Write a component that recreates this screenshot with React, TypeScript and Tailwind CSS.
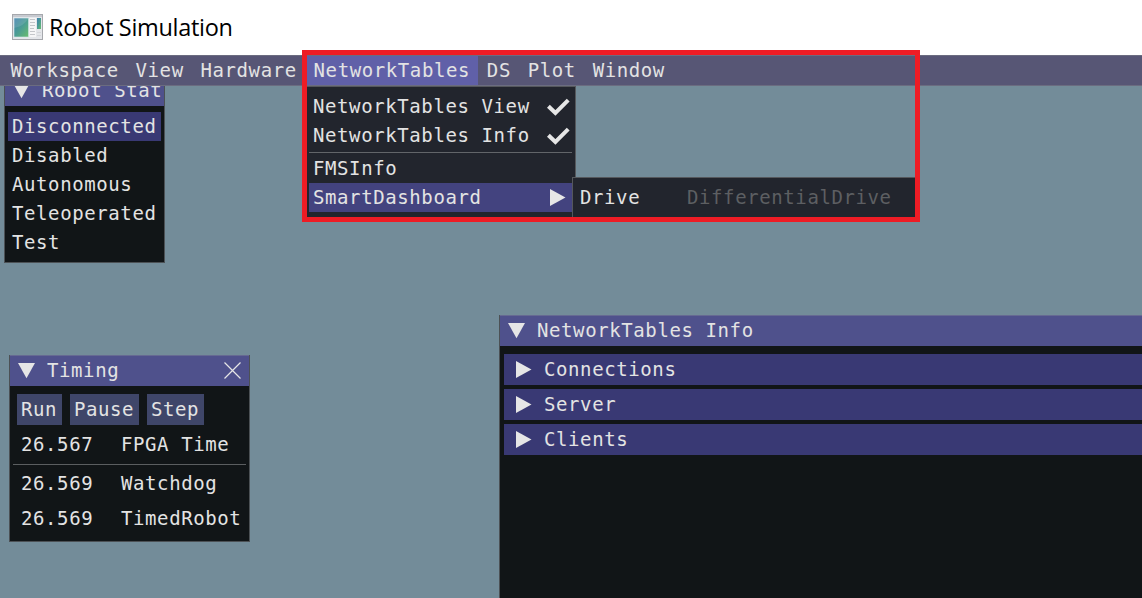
import React from "react";

function Down({ className = "" }: { className?: string }) {
  return (
    <svg width="17" height="16" viewBox="0 0 17 16" className={"shrink-0 " + className}>
      <path d="M0 0H17L8.5 15.3Z" fill="#e6e6e6" />
    </svg>
  );
}

function Right({ className = "" }: { className?: string }) {
  return (
    <svg width="16" height="17" viewBox="0 0 16 17" className={"shrink-0 " + className}>
      <path d="M0 0V17L15.5 8.5Z" fill="#e6e6e6" />
    </svg>
  );
}

function Check() {
  return (
    <svg width="23" height="18" viewBox="0 0 23 18" className="shrink-0">
      <path d="M1.4 8.2L8.4 15L21.2 2.2" fill="none" stroke="#e6e6e6" strokeWidth="4" />
    </svg>
  );
}

function AppIcon() {
  return (
    <svg width="32" height="27" viewBox="0 0 32 27" className="shrink-0">
      <defs>
        <linearGradient id="screen" x1="0" y1="0" x2="1" y2="1">
          <stop offset="0" stopColor="#3f7fae" />
          <stop offset="0.5" stopColor="#4b9c94" />
          <stop offset="1" stopColor="#68bd6c" />
        </linearGradient>
      </defs>
      <rect x="0.5" y="0.5" width="30" height="25" fill="#e4e6ea" stroke="#a6a8ad" />
      <rect x="1" y="1" width="29" height="2" fill="#c7cad0" />
      <rect x="2" y="4" width="14.5" height="19" fill="url(#screen)" stroke="#d3e8ea" strokeWidth="0.6" />
      <path d="M2 14Q12 12 16 5V4H2Z" fill="#ffffff" opacity="0.12" />
      <rect x="17.5" y="4" width="6.5" height="19" fill="#f6f6f7" />
      <path d="M18 5.5h5M18 8.5h5M18 11.5h5M18 14.5h4M18 17.5h5M18 20.5h5" stroke="#c4c6ca" strokeWidth="1" />
      <rect x="25" y="4" width="4" height="11" fill="url(#screen)" />
      <path d="M25 18.5h4M25 21.5h4" stroke="#d3d5d9" />
    </svg>
  );
}

const menuItems = ["Workspace", "View", "Hardware", "NetworkTables", "DS", "Plot", "Window"];
const modes = ["Disconnected", "Disabled", "Autonomous", "Teleoperated", "Test"];

function TitleBar({ children }: { children: React.ReactNode }) {
  return (
    <div className="flex h-[31px] items-center border-t border-[#666a92] bg-[#4f518c] pb-px pl-2 pr-2">
      {children}
    </div>
  );
}

function TimeRow({ value, name }: { value: string; name: string }) {
  return (
    <div className="flex h-[35px] items-center pl-[11px]">
      <span className="w-[100px]">{value}</span>
      <span>{name}</span>
    </div>
  );
}

export default function App() {
  return (
    <div className="relative flex h-[598px] w-[1142px] flex-col overflow-hidden bg-[#738c99] font-['DejaVu_Sans_Mono',monospace] text-[19px] leading-[29px] tracking-[0.6px] whitespace-pre text-[#e3e3e3]">
      <header className="flex h-[55px] shrink-0 items-center bg-white pl-3 font-['Open_Sans',sans-serif] text-[23.5px] tracking-[-0.3px] text-black">
        <AppIcon />
        <span className="pl-[5px]">Robot Simulation</span>
      </header>

      <nav className="z-10 flex h-[31px] shrink-0 border-y border-[#6b6c80] bg-[#575675] pl-[2px]">
        {menuItems.map((m) => (
          <span
            key={m}
            className={"px-[8.4px] " + (m === "NetworkTables" ? "bg-[#6060a8]" : "")}
          >
            {m}
          </span>
        ))}
      </nav>

      <section className="absolute left-1 top-[75px] flex h-[188px] w-[161px] flex-col border border-t-0 border-[#4c5155] bg-[#111517]">
        <div className="flex h-[31px] shrink-0 items-center bg-[#4f518c] pl-2">
          <Down />
          <span className="ml-3 w-[121px] overflow-hidden">Robot State</span>
        </div>
        <div className="px-[3px] pt-[6px]">
          {modes.map((m) => (
            <div key={m} className={"h-[29px] pl-1 " + (m === "Disconnected" ? "bg-[#393974]" : "")}>
              {m}
            </div>
          ))}
        </div>
      </section>

      <section className="absolute left-[9px] top-[355px] flex h-[187px] w-[241px] flex-col border border-t-0 border-[#4c5155] bg-[#111517]">
        <TitleBar>
          <Down />
          <span className="flex-1 pl-3">Timing</span>
          <svg width="17" height="17" viewBox="0 0 17 17">
            <path d="M0.5 0.5L16.5 16.5M16.5 0.5L0.5 16.5" stroke="#e6e6e6" strokeWidth="1.2" />
          </svg>
        </TitleBar>
        <div className="flex gap-2 pl-[7px] pt-2">
          {["Run", "Pause", "Step"].map((b) => (
            <button key={b} className="h-[31px] bg-[#3f4669] pl-1 pr-[4.8px] tracking-[0.6px]">
              {b}
            </button>
          ))}
        </div>
        <div className="pt-[2px]">
          <TimeRow value="26.567" name="FPGA Time" />
        </div>
        <div className="mx-[3px] mt-[2px] mb-[1px] h-px shrink-0 bg-[#5b5e60]" />
        <TimeRow value="26.569" name="Watchdog" />
        <TimeRow value="26.569" name="TimedRobot" />
      </section>

      <section className="absolute left-[499px] top-[315px] flex h-[283px] w-[643px] flex-col border-l border-[#4c5155] bg-[#111517]">
        <TitleBar>
          <Down />
          <span className="pl-3">NetworkTables Info</span>
        </TitleBar>
        <div className="flex flex-col gap-1 pl-1 pt-2">
          {["Connections", "Server", "Clients"].map((h) => (
            <div key={h} className="flex h-[31px] items-center bg-[#393974] pl-3">
              <Right />
              <span className="pl-3">{h}</span>
            </div>
          ))}
        </div>
      </section>

      <div className="absolute left-[306px] top-[86px] h-[134px] w-[270px] border border-[#55585c] bg-[#22252d] pl-[2px] pr-[3px] pt-[5px]">
        {["NetworkTables View", "NetworkTables Info"].map((t) => (
          <div key={t} className="flex h-[29px] items-center justify-between pl-[4px] pr-[2px]">
            <span>{t}</span>
            <Check />
          </div>
        ))}
        <div className="my-[2px] h-px bg-[#626569]" />
        <div className="-mt-px h-[29px] pl-[4px]">FMSInfo</div>
        <div className="flex h-[29px] items-center justify-between bg-[#43437f] pl-[4px] pr-[6px]">
          <span>SmartDashboard</span>
          <Right />
        </div>
      </div>

      <div className="absolute left-[572px] top-[177px] flex h-[43px] w-[346px] border border-[#55585c] bg-[#22252d] pl-[7px] pt-[5px]">
        <span className="w-[107px]">Drive</span>
        <span className="text-[#5d5f62]">DifferentialDrive</span>
      </div>

      <div className="absolute left-[302px] top-[50px] z-20 h-[172px] w-[618px] border-[5px] border-[#ee1c25]" />
    </div>
  );
}
